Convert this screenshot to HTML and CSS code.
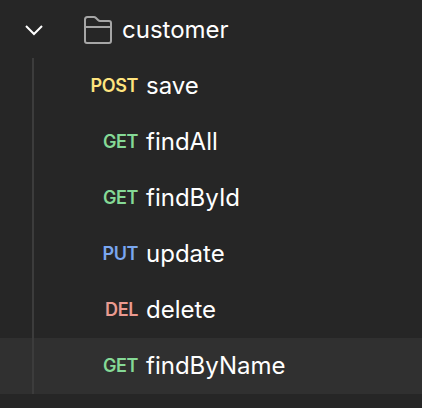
FILE: index.html
```html
<!DOCTYPE html>
<html lang="en">
<head>
<meta charset="utf-8">
<title>customer</title>
<link rel="stylesheet" href="styles.css">
</head>
<body>
<nav class="tree">
  <div class="folder">
    <svg class="chevron" width="20" height="12" viewBox="0 0 20 12"><path d="M2 2l8 8 8-8"/></svg>
    <svg class="icon" width="30" height="30" viewBox="0 0 30 30"><path d="M2 26V4.500q0-2.500 2.500-2.500H11q1 0 1.700.7l2.600 2.600q.7.700 1.700.7H26q2 0 2 2V26q0 2-2 2H4q-2 0-2-2zM2 12h26"/></svg>
    <span class="name">customer</span>
  </div>
  <ul class="requests">
    <li class="row"><span class="method post">POST</span><span class="name">save</span></li>
    <li class="row"><span class="method get">GET</span><span class="name">findAll</span></li>
    <li class="row"><span class="method get">GET</span><span class="name">findById</span></li>
    <li class="row"><span class="method put">PUT</span><span class="name">update</span></li>
    <li class="row"><span class="method del">DEL</span><span class="name">delete</span></li>
    <li class="row selected"><span class="method get">GET</span><span class="name">findByName</span></li>
  </ul>
</nav>
</body>
</html>
```
FILE: styles.css
```css
body {
  margin: 0;
  background: #262626;
  color: #fff;
  font-family: Inter, sans-serif;
}
.tree {
  height: 408px;
  overflow: hidden;
}
.folder {
  display: flex;
  align-items: center;
  box-sizing: border-box;
  height: 58px;
  padding: 2px 0 0 24px;
}
.folder svg {
  fill: none;
  stroke-width: 2;
}
.chevron {
  stroke: #fff;
}
.icon {
  margin-left: 39px;
  margin-right: 9px;
  stroke: #a6a6a6;
}
.name {
  font-size: 24px;
  line-height: 56px;
}
.requests {
  list-style: none;
  margin: 0;
  padding: 0;
}
.row {
  display: flex;
  align-items: center;
  height: 56px;
}
.row::before {
  content: "";
  width: 2px;
  height: 56px;
  margin-left: 32px;
  background: #3c3c3c;
}
.selected {
  background: #303030;
}
.method {
  width: 104px;
  margin-right: 8px;
  text-align: right;
  font-size: 18px;
  line-height: 22px;
  font-weight: 600;
  letter-spacing: -0.4px;
}
.post { color: #ffe47e; }
.get { color: #85d996; }
.put { color: #7aa7f0; }
.del { color: #ea9a90; }
```
